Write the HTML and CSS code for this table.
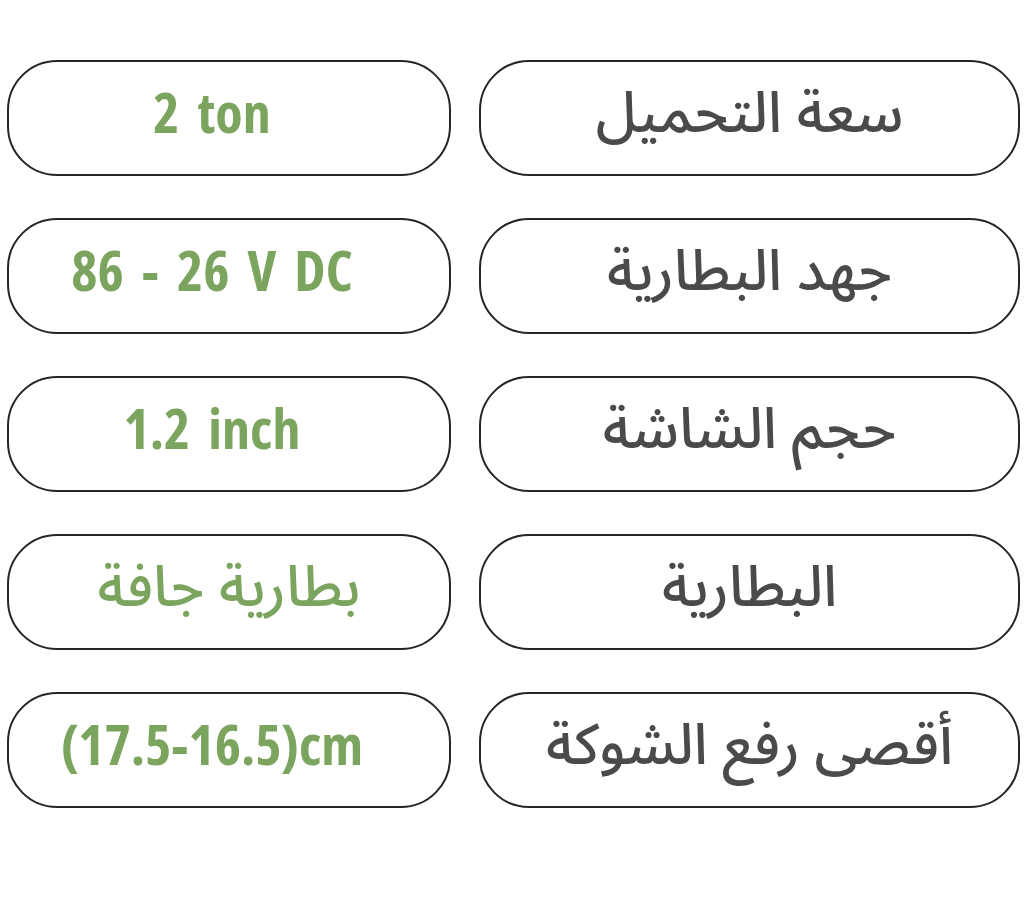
FILE: index.html
```html
<!DOCTYPE html>
<html lang="ar">
<head>
<meta charset="utf-8">
<link rel="stylesheet" href="styles.css">
</head>
<body>
<div class="specs">
  <div class="pill value"><span>2 ton</span></div>
  <div class="pill label"><span>سعة التحميل</span></div>
  <div class="pill value"><span>86 - 26 V DC</span></div>
  <div class="pill label"><span>جهد البطارية</span></div>
  <div class="pill value"><span>1.2 inch</span></div>
  <div class="pill label"><span>حجم الشاشة</span></div>
  <div class="pill value ar"><span>بطارية جافة</span></div>
  <div class="pill label"><span>البطارية</span></div>
  <div class="pill value"><span>(17.5-16.5)cm</span></div>
  <div class="pill label"><span>أقصى رفع الشوكة</span></div>
</div>
</body>
</html>
```
FILE: styles.css
```css
html, body {
  margin: 0;
  padding: 0;
  background: #ffffff;
}
.specs {
  display: grid;
  grid-template-columns: 444px 541px;
  column-gap: 28px;
  row-gap: 42px;
  padding: 60px 0 0 7px;
}
.pill {
  height: 116px;
  box-sizing: border-box;
  border: 2px solid #262626;
  border-radius: 50px;
  display: flex;
  align-items: center;
  justify-content: center;
}
.value {
  padding-right: 34px;
  color: #7ba45f;
  font-family: "Open Sans", "Noto Sans", sans-serif;
  font-weight: 700;
  font-size: 56px;
  font-stretch: 75%;
  letter-spacing: 0;
  word-spacing: 8px;
}
.value span { margin-top: -15px; }
.value.ar {
  font-family: "Noto Sans Arabic", "DejaVu Sans", sans-serif;
  font-weight: 500;
  font-size: 57px;
  font-stretch: 100%;
  letter-spacing: 0;
  word-spacing: 0;
  padding-right: 0;
  direction: rtl;
}
.value.ar span { margin-top: -8px; }
.label {
  color: #4a4a4a;
  font-family: "Noto Sans Arabic", "DejaVu Sans", sans-serif;
  font-weight: 500;
  font-size: 57px;
  direction: rtl;
}
.label span { margin-top: -8px; }
```
